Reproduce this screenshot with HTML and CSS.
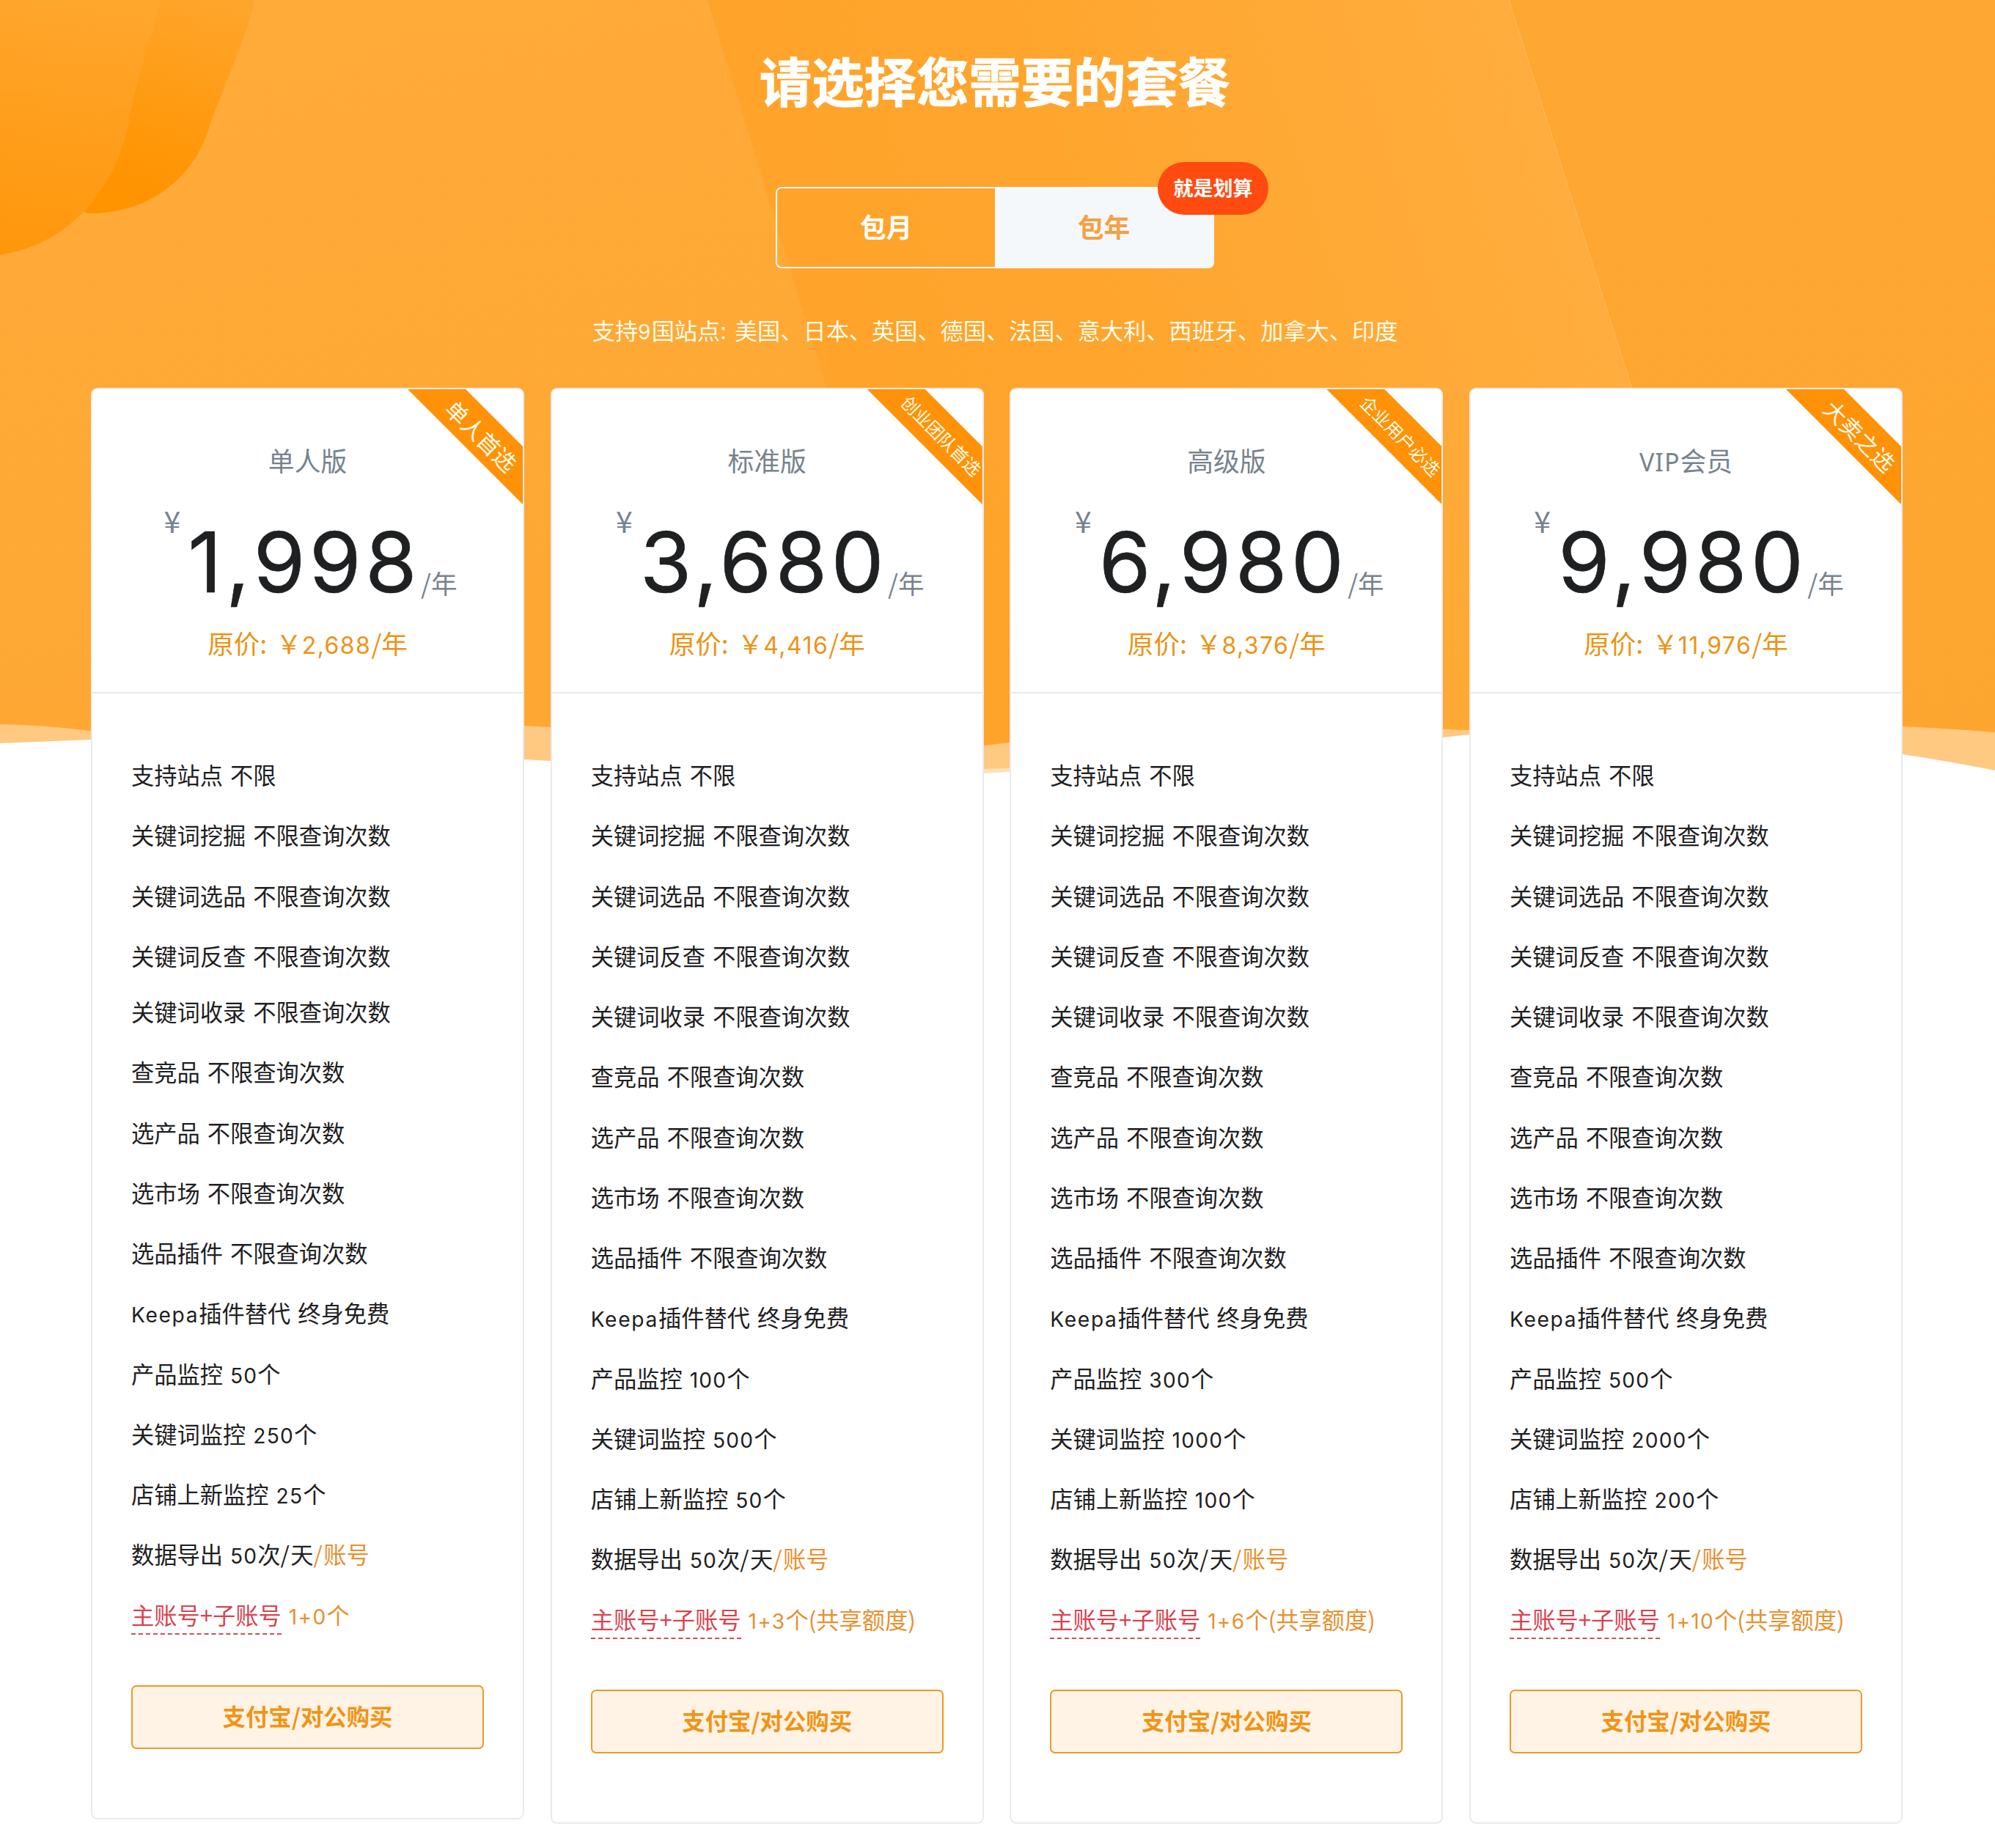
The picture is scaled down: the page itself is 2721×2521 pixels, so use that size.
FILE: index.html
```html
<!DOCTYPE html>
<html lang="zh-CN">
<head>
    <meta charset="UTF-8">
    <meta name="viewport" content="width=device-width, initial-scale=1.0">
    <title>请选择您需要的套餐</title>
    <link rel="stylesheet" href="styles.css">
</head>
<body>

<svg class="hero-bg" width="2721" height="1060" viewBox="0 0 2721 1060">
    <defs>
        <linearGradient id="left" x1="0" y1="0" x2="0.3" y2="1">
            <stop offset="0" stop-color="#ffab3a"/>
            <stop offset="1" stop-color="#fea733"/>
        </linearGradient>
        <linearGradient id="middle" gradientUnits="userSpaceOnUse" x1="965" y1="0" x2="1958" y2="-315">
            <stop offset="0" stop-color="#ffa32a"/>
            <stop offset="0.35" stop-color="#ffa52d"/>
            <stop offset="1" stop-color="#ffad3e"/>
        </linearGradient>
        <linearGradient id="right" x1="0" y1="0" x2="0" y2="1">
            <stop offset="0" stop-color="#ffa733"/>
            <stop offset="1" stop-color="#fda62f"/>
        </linearGradient>
        <linearGradient id="blobBack" gradientUnits="userSpaceOnUse" x1="280" y1="0" x2="200" y2="270">
            <stop offset="0" stop-color="#ffa52b"/>
            <stop offset="0.75" stop-color="#ff9708"/>
            <stop offset="1" stop-color="#ff9300"/>
        </linearGradient>
        <linearGradient id="blobFront" gradientUnits="userSpaceOnUse" x1="90" y1="0" x2="40" y2="340">
            <stop offset="0" stop-color="#ffa62d"/>
            <stop offset="1" stop-color="#ff970c"/>
        </linearGradient>
        <clipPath id="wave">
            <path d="M0 0H2721V999C2670 995 2640 993 2595 991C2400 982 2200 992 2004 996C1990 996 1980 995 1968 995C1750 976 1570 984 1376 1013L1342 1017C1150 1035 950 1008 750 992L715 990C600 984 300 1010 124 997Q60 989 0 988Z"/>
        </clipPath>
    </defs>
    <path fill="#fee0b8" d="M1100 1020L1342 1055L1376 1053L1700 1000Z"/>
    <path fill="#ffc982" d="M0 960H2721V1051Q2655 1038 2595 1029C2400 990 2200 982 2004 1002L1968 1006C1750 1036 1570 1044 1376 1048L1342 1049C1150 1056 950 1050 750 1038L715 1036C500 1010 300 1001 124 1009L0 1014Z"/>
    <g clip-path="url(#wave)">
        <rect width="1300" height="1060" fill="url(#left)"/>
        <path fill="url(#middle)" d="M965 0H2058L2394 1060H1290Z"/>
        <path fill="url(#right)" d="M2058 0H2721V1060H2394Z"/>
        <path fill="url(#blobBack)" d="M0 0H347C341 40 300 130 285 175C265 240 205 293 118 291L0 200Z"/>
        <path fill="url(#blobFront)" d="M0 0H220C208 40 186 110 176 165C162 240 110 330 0 348Z"/>
    </g>
</svg>

<div class="hero">
    <h2>请选择您需要的套餐</h2>
    <div class="toggle">
        <a class="toggle-item">包月</a>
        <a class="toggle-item active">包年</a>
        <span class="badge">就是划算</span>
    </div>
    <p class="sites">支持<span class="num">9</span>国站点: 美国、日本、英国、德国、法国、意大利、西班牙、加拿大、印度</p>
</div>

<div class="plans">
    <div class="card">
        <div class="ribbon"><span class="ribbon-text">单人首选</span></div>
        <div class="card-header">
            <div class="plan-name">单人版</div>
            <div class="price"><span class="currency">¥</span><span class="amount">1,998</span><span class="unit">/年</span></div>
            <div class="origin">原价: ￥<span class="num">2,688</span>/年</div>
        </div>
        <div class="card-body">
            <ul class="features">
                <li>支持站点 不限</li>
                <li>关键词挖掘 不限查询次数</li>
                <li>关键词选品 不限查询次数</li>
                <li class="tight">关键词反查 不限查询次数</li>
                <li>关键词收录 不限查询次数</li>
                <li>查竞品 不限查询次数</li>
                <li>选产品 不限查询次数</li>
                <li>选市场 不限查询次数</li>
                <li>选品插件 不限查询次数</li>
                <li><span class="num word">Keepa</span>插件替代 终身免费</li>
                <li>产品监控 <span class="num">50</span>个</li>
                <li>关键词监控 <span class="num">250</span>个</li>
                <li>店铺上新监控 <span class="num">25</span>个</li>
                <li>数据导出 <span class="num">50</span>次<span class="slash">/</span>天<span class="orange"><span class="slash">/</span>账号</span></li>
                <li><span class="tip">主账号+子账号</span> <span class="orange"><span class="num">1+0</span>个</span></li>
            </ul>
            <a class="buy">支付宝/对公购买</a>
        </div>
    </div>

    <div class="card">
        <div class="ribbon"><span class="ribbon-text small">创业团队首选</span></div>
        <div class="card-header">
            <div class="plan-name">标准版</div>
            <div class="price"><span class="currency">¥</span><span class="amount">3,680</span><span class="unit">/年</span></div>
            <div class="origin">原价: ￥<span class="num">4,416</span>/年</div>
        </div>
        <div class="card-body">
            <ul class="features">
                <li>支持站点 不限</li>
                <li>关键词挖掘 不限查询次数</li>
                <li>关键词选品 不限查询次数</li>
                <li>关键词反查 不限查询次数</li>
                <li>关键词收录 不限查询次数</li>
                <li>查竞品 不限查询次数</li>
                <li>选产品 不限查询次数</li>
                <li>选市场 不限查询次数</li>
                <li>选品插件 不限查询次数</li>
                <li><span class="num word">Keepa</span>插件替代 终身免费</li>
                <li>产品监控 <span class="num">100</span>个</li>
                <li>关键词监控 <span class="num">500</span>个</li>
                <li>店铺上新监控 <span class="num">50</span>个</li>
                <li>数据导出 <span class="num">50</span>次<span class="slash">/</span>天<span class="orange"><span class="slash">/</span>账号</span></li>
                <li><span class="tip">主账号+子账号</span> <span class="orange"><span class="num">1+3</span>个(共享额度)</span></li>
            </ul>
            <a class="buy">支付宝/对公购买</a>
        </div>
    </div>

    <div class="card">
        <div class="ribbon"><span class="ribbon-text small">企业用户必选</span></div>
        <div class="card-header">
            <div class="plan-name">高级版</div>
            <div class="price"><span class="currency">¥</span><span class="amount">6,980</span><span class="unit">/年</span></div>
            <div class="origin">原价: ￥<span class="num">8,376</span>/年</div>
        </div>
        <div class="card-body">
            <ul class="features">
                <li>支持站点 不限</li>
                <li>关键词挖掘 不限查询次数</li>
                <li>关键词选品 不限查询次数</li>
                <li>关键词反查 不限查询次数</li>
                <li>关键词收录 不限查询次数</li>
                <li>查竞品 不限查询次数</li>
                <li>选产品 不限查询次数</li>
                <li>选市场 不限查询次数</li>
                <li>选品插件 不限查询次数</li>
                <li><span class="num word">Keepa</span>插件替代 终身免费</li>
                <li>产品监控 <span class="num">300</span>个</li>
                <li>关键词监控 <span class="num">1000</span>个</li>
                <li>店铺上新监控 <span class="num">100</span>个</li>
                <li>数据导出 <span class="num">50</span>次<span class="slash">/</span>天<span class="orange"><span class="slash">/</span>账号</span></li>
                <li><span class="tip">主账号+子账号</span> <span class="orange"><span class="num">1+6</span>个(共享额度)</span></li>
            </ul>
            <a class="buy">支付宝/对公购买</a>
        </div>
    </div>

    <div class="card">
        <div class="ribbon"><span class="ribbon-text">大卖之选</span></div>
        <div class="card-header">
            <div class="plan-name"><span class="latin">VIP</span>会员</div>
            <div class="price"><span class="currency">¥</span><span class="amount">9,980</span><span class="unit">/年</span></div>
            <div class="origin">原价: ￥<span class="num">11,976</span>/年</div>
        </div>
        <div class="card-body">
            <ul class="features">
                <li>支持站点 不限</li>
                <li>关键词挖掘 不限查询次数</li>
                <li>关键词选品 不限查询次数</li>
                <li>关键词反查 不限查询次数</li>
                <li>关键词收录 不限查询次数</li>
                <li>查竞品 不限查询次数</li>
                <li>选产品 不限查询次数</li>
                <li>选市场 不限查询次数</li>
                <li>选品插件 不限查询次数</li>
                <li><span class="num word">Keepa</span>插件替代 终身免费</li>
                <li>产品监控 <span class="num">500</span>个</li>
                <li>关键词监控 <span class="num">2000</span>个</li>
                <li>店铺上新监控 <span class="num">200</span>个</li>
                <li>数据导出 <span class="num">50</span>次<span class="slash">/</span>天<span class="orange"><span class="slash">/</span>账号</span></li>
                <li><span class="tip">主账号+子账号</span> <span class="orange"><span class="num">1+10</span>个(共享额度)</span></li>
            </ul>
            <a class="buy">支付宝/对公购买</a>
        </div>
    </div>
</div>

</body>
</html>
```
FILE: styles.css
```css
* {
    box-sizing: border-box;
}
body {
    margin: 0;
    position: relative;
    font-family: "Noto Sans CJK SC", sans-serif;
    font-size: 31.2px;
    color: #1e2022;
    background: #fff;
    overflow-x: hidden;
}
.hero-bg {
    position: absolute;
    left: 0;
    top: 0;
    display: block;
}
.num {
    font-family: Inter, sans-serif;
    font-size: 0.9em;
    letter-spacing: 0.045em;
}
.num.word {
    letter-spacing: 0.06em;
}
.slash {
    letter-spacing: 1.5px;
}
.latin {
    font-family: "Noto Sans", sans-serif;
    font-size: 34px;
    line-height: 1;
    letter-spacing: 1px;
}

/* header */
.hero {
    position: relative;
    width: 2714px;
    height: 529px;
    padding-top: 58px;
    display: flex;
    flex-direction: column;
    align-items: center;
    color: #fff;
}
.hero h2 {
    margin: 0;
    font-size: 71.4px;
    font-weight: 700;
    line-height: 100px;
    -webkit-text-stroke: 1px #fff;
}
.toggle {
    position: relative;
    display: flex;
    width: 598px;
    height: 111px;
    margin-top: 97px;
    border: 2px solid #f5f8fb;
    border-radius: 8px;
}
.toggle-item {
    flex: 1;
    font-size: 35.8px;
    font-weight: 700;
    line-height: 103px;
    text-align: center;
}
.toggle-item.active {
    background: #f5f8fb;
    color: #f5a044;
}
.badge {
    position: absolute;
    right: -76px;
    top: -36px;
    width: 151px;
    height: 72px;
    border-radius: 36px;
    background: #ff4b0f;
    font-size: 27px;
    font-weight: 700;
    line-height: 69px;
    text-align: center;
}
.sites {
    margin: 59px 0 0;
    line-height: 50px;
    word-spacing: 4px;
    color: #fffbe8;
}

/* plans */
.plans {
    position: relative;
    display: flex;
    align-items: flex-start;
    gap: 35.6px;
    width: 2595px;
    padding-left: 124px;
}
.card {
    position: relative;
    flex: 1;
    background: #fff;
    border: 2px solid #e7eaf0;
    border-radius: 9px;
}
.ribbon {
    position: absolute;
    top: 0;
    right: 0;
    display: flex;
    align-items: center;
    justify-content: center;
    width: 160px;
    height: 160px;
    padding: 0 0 33px 48px;
}
.ribbon::before {
    content: "";
    position: absolute;
    inset: 0;
    background: #ff9208;
    clip-path: polygon(3px 0, 82px 0, 100% 78px, 100% 157px);
}
.ribbon-text {
    flex-shrink: 0;
    color: #fffbe8;
    font-size: 30.5px;
    line-height: 1;
    white-space: nowrap;
    transform: rotate(45deg);
}
.ribbon-text.small {
    font-size: 23.7px;
}
.card-header {
    height: 415px;
    padding-top: 68px;
    border-bottom: 2px solid #e7eaf0;
    text-align: center;
}
.plan-name {
    height: 56px;
    font-size: 35.8px;
    line-height: 56px;
    color: #77838f;
}
.price {
    display: flex;
    justify-content: center;
    height: 170px;
    margin-top: 27px;
    padding-left: 8px;
    color: #77838f;
    font-size: 35.6px;
}
.currency {
    margin-right: 10px;
    font-size: 41px;
    line-height: 54px;
}
.amount {
    font-family: Inter, sans-serif;
    font-size: 114.5px;
    line-height: 170px;
    letter-spacing: 5.2px;
    color: #1e2022;
    -webkit-text-stroke: 0.6px #1e2022;
}
.unit {
    padding-top: 85px;
    line-height: 56px;
}
.origin {
    margin-top: -3px;
    font-size: 35.6px;
    line-height: 56px;
    word-spacing: 4px;
    color: #ec9316;
}
.card-body {
    padding: 71px 53px 94px;
}
.features {
    list-style: none;
    margin: 0;
    padding: 0;
    word-spacing: 3px;
}
.features li {
    height: 82.25px;
    font-size: 31.25px;
    line-height: 79px;
    white-space: nowrap;
}
.features li.tight {
    margin-bottom: -6px;
}
.orange {
    color: #e8902f;
}
.tip {
    padding-bottom: 3px;
    color: #d8434f;
    border-bottom: 2px dashed #c8505c;
}
.buy {
    display: block;
    height: 87px;
    margin-top: 54px;
    border: 2px solid #eb9a2b;
    border-radius: 7px;
    background: #fef3e5;
    color: #f29315;
    font-size: 31.4px;
    font-weight: 700;
    line-height: 80px;
    text-align: center;
}
```
